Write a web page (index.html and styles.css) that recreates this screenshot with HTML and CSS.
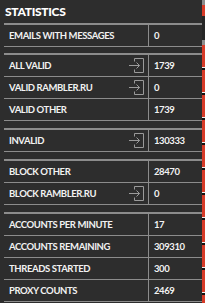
FILE: index.html
```html
<!DOCTYPE html>
<html lang="en">
<head>
    <meta charset="UTF-8">
    <meta name="viewport" content="width=device-width, initial-scale=1.0">
    <title>Statistics</title>
    <link rel="stylesheet" href="styles.css">
</head>
<body>
    <div class="wrap">
        <div class="panel">
            <h1 class="title">STATISTICS</h1>

            <div class="group">
                <div class="row"><span class="label">EMAILS WITH MESSAGES</span><span class="value">0</span></div>
            </div>

            <div class="group">
                <div class="row">
                    <span class="label">ALL VALID
                        <svg class="ico" viewBox="0 0 17 17"><path d="M6.5 4.5V1.5H15.5V15.5H6.5V12.5M1 8.5H11.5M8.5 5.5L11.5 8.5L8.5 11.5"/></svg>
                    </span>
                    <span class="value">1739</span>
                </div>
                <div class="row">
                    <span class="label">VALID RAMBLER.RU
                        <svg class="ico" viewBox="0 0 17 17"><path d="M6.5 4.5V1.5H15.5V15.5H6.5V12.5M1 8.5H11.5M8.5 5.5L11.5 8.5L8.5 11.5"/></svg>
                    </span>
                    <span class="value">0</span>
                </div>
                <div class="row"><span class="label">VALID OTHER</span><span class="value">1739</span></div>
            </div>

            <div class="group">
                <div class="row">
                    <span class="label">INVALID
                        <svg class="ico" viewBox="0 0 17 17"><path d="M6.5 4.5V1.5H15.5V15.5H6.5V12.5M1 8.5H11.5M8.5 5.5L11.5 8.5L8.5 11.5"/></svg>
                    </span>
                    <span class="value">130333</span>
                </div>
            </div>

            <div class="group">
                <div class="row"><span class="label">BLOCK OTHER</span><span class="value">28470</span></div>
                <div class="row">
                    <span class="label">BLOCK RAMBLER.RU
                        <svg class="ico" viewBox="0 0 17 17"><path d="M6.5 4.5V1.5H15.5V15.5H6.5V12.5M1 8.5H11.5M8.5 5.5L11.5 8.5L8.5 11.5"/></svg>
                    </span>
                    <span class="value">0</span>
                </div>
            </div>

            <div class="group">
                <div class="row"><span class="label">ACCOUNTS PER MINUTE</span><span class="value">17</span></div>
                <div class="row"><span class="label">ACCOUNTS REMAINING</span><span class="value">309310</span></div>
                <div class="row"><span class="label">THREADS STARTED</span><span class="value">300</span></div>
                <div class="row"><span class="label">PROXY COUNTS</span><span class="value">2469</span></div>
            </div>
        </div>

        <div class="edge">
            <div class="edge-top"></div>
            <div class="edge-red"></div>
            <div class="edge-dark"></div>
            <div class="edge-top"></div>
            <div class="edge-list"></div>
        </div>
    </div>
</body>
</html>
```

FILE: styles.css
```css
@charset "utf-8";

*{
    padding: 0px;
    margin: 0px;
    box-sizing: border-box;
}
body{
    background-color: #2d2d2d;
    color: #f2f2f2;
    font: 700 9.5px Lato, "Noto Sans", sans-serif;
    letter-spacing: -0.4px;
    overflow: hidden;
}
.wrap{
    display: flex;
    height: 303px;
}
.panel{
    width: 202px;
    padding-left: 4px;
}
.title{
    height: 23px;
    padding-left: 1px;
    font-size: 12px;
    font-weight: 900;
    letter-spacing: -0.3px;
    line-height: 24px;
    color: #fff;
}
.group{
    border-top: 2px solid #8c8c8c;
    margin-bottom: 7px;
}
.group:first-of-type{
    margin-bottom: 6px;
}
.row{
    display: flex;
    height: 22px;
    border-bottom: 1px solid #8c8c8c;
}
.label{
    width: 145px;
    padding: 0 3px 0 5px;
    display: flex;
    align-items: center;
    justify-content: space-between;
    border-right: 1px solid #8c8c8c;
    white-space: nowrap;
}
.value{
    padding-left: 5px;
    display: flex;
    align-items: center;
}
.ico{
    width: 17px;
    height: 17px;
    fill: none;
    stroke: #9a9a9a;
    stroke-width: 1;
}
.edge{
    width: 3px;
    display: flex;
    flex-direction: column;
}
.edge-top{
    height: 5px;
    background: #8c8c8c;
}
.edge-red{
    height: 11px;
    background: #d63a27;
}
.edge-dark{
    height: 24px;
    background: #262626;
}
.edge-list{
    flex: 1;
    background: repeating-linear-gradient(#d63a27 0px, #d63a27 22px, #f0f0f0 22px, #f0f0f0 23px, #111 23px, #111 25px);
}
```
